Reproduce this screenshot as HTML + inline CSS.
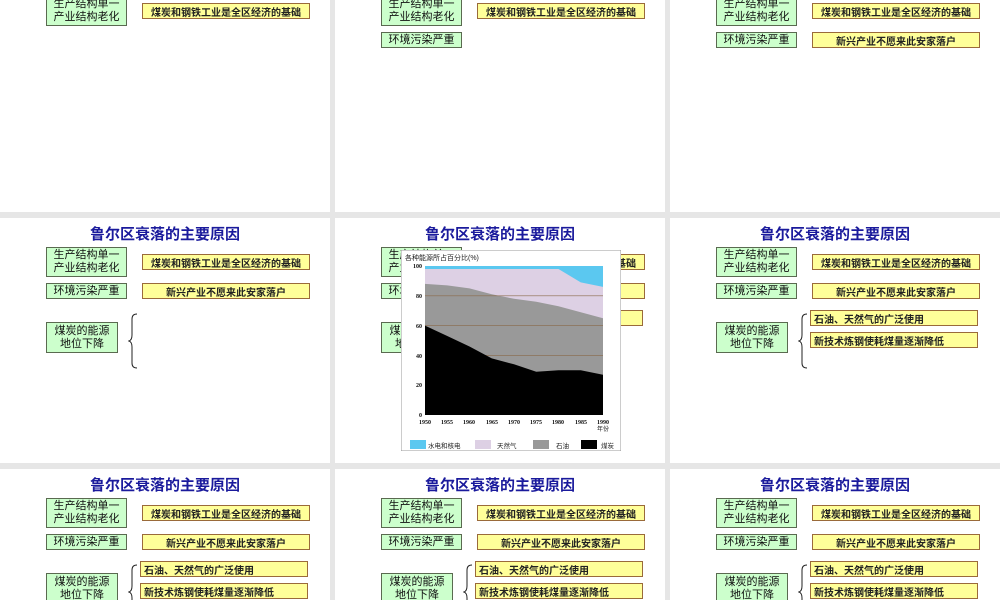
<!DOCTYPE html>
<html><head><meta charset="utf-8"><style>
*{margin:0;padding:0;box-sizing:border-box}
html,body{width:1000px;height:600px;overflow:hidden}
body{background:#e6e6e6;position:relative;font-family:"Liberation Sans","Noto Sans CJK SC",sans-serif}
.s{position:absolute;width:330px;height:245px;background:#fff;overflow:hidden}
.s.b{height:131px}
.t{position:absolute;left:0;width:330px;top:5px;text-align:center;font-size:15px;font-weight:bold;color:#1a1a9c}
.g{position:absolute;background:#ccffcc;border:1px solid #5a6a50;font-size:11px;line-height:13px;text-align:center;color:#111;display:flex;align-items:center;justify-content:center}
.y{position:absolute;background:#ffff99;border:1px solid #9a6a3a;font-size:10px;font-weight:bold;color:#222;height:16px;width:168px;display:flex;align-items:center}
.c{justify-content:center}
.l{padding-left:3px}
.br{position:absolute;left:128px;top:95px}
</style></head><body>

<div class="s" style="left:0;top:-33px">
<div class="g" style="left:46px;top:29px;width:81px;height:30px">生产结构单一<br>产业结构老化</div>
<div class="y c" style="left:142px;top:36px">煤炭和钢铁工业是全区经济的基础</div>
</div>
<div class="s" style="left:335px;top:-33px">
<div class="g" style="left:46px;top:29px;width:81px;height:30px">生产结构单一<br>产业结构老化</div>
<div class="y c" style="left:142px;top:36px">煤炭和钢铁工业是全区经济的基础</div>
<div class="g" style="left:46px;top:65px;width:81px;height:16px">环境污染严重</div>
</div>
<div class="s" style="left:670px;top:-33px">
<div class="g" style="left:46px;top:29px;width:81px;height:30px">生产结构单一<br>产业结构老化</div>
<div class="y c" style="left:142px;top:36px">煤炭和钢铁工业是全区经济的基础</div>
<div class="g" style="left:46px;top:65px;width:81px;height:16px">环境污染严重</div>
<div class="y c" style="left:142px;top:65px">新兴产业不愿来此安家落户</div>
</div>

<div class="s" style="left:0;top:218px">
<div class="t">鲁尔区衰落的主要原因</div>
<div class="g" style="left:46px;top:29px;width:81px;height:30px">生产结构单一<br>产业结构老化</div>
<div class="y c" style="left:142px;top:36px">煤炭和钢铁工业是全区经济的基础</div>
<div class="g" style="left:46px;top:65px;width:81px;height:16px">环境污染严重</div>
<div class="y c" style="left:142px;top:65px">新兴产业不愿来此安家落户</div>
<div class="g" style="left:46px;top:104px;width:72px;height:31px">煤炭的能源<br>地位下降</div>
<svg class="br" width="12" height="56"><path d="M9 1 Q4 1 4 6 V22 Q4 27 1 28 Q4 29 4 34 V50 Q4 55 9 55" fill="none" stroke="#222" stroke-width="1"/></svg>
</div>
<div class="s" style="left:335px;top:218px">
<div class="t">鲁尔区衰落的主要原因</div>
<div class="g" style="left:46px;top:29px;width:81px;height:30px">生产结构单一<br>产业结构老化</div>
<div class="y c" style="left:142px;top:36px">煤炭和钢铁工业是全区经济的基础</div>
<div class="g" style="left:46px;top:65px;width:81px;height:16px">环境污染严重</div>
<div class="y c" style="left:142px;top:65px">新兴产业不愿来此安家落户</div>
<div class="g" style="left:46px;top:104px;width:72px;height:31px">煤炭的能源<br>地位下降</div>
<div class="y l" style="left:140px;top:92px">石油、天然气的广泛使用</div>
<svg style="position:absolute;left:66px;top:32px" width="220" height="201">
<rect x="0" y="0" width="220" height="201" fill="#fff" stroke="#999"/>
<text x="4" y="10" font-size="7" fill="#222" font-family="Liberation Sans,Noto Sans CJK SC,sans-serif">各种能源所占百分比(%)</text>
<rect x="24" y="16" width="178" height="149" fill="#5bc8f0"/>
<polygon points="24,19 46.25,19 68.5,19 90.75,19 113,19 135.25,19 157.5,19 179.75,32.4 202,36.9 202,165 24,165" fill="#ddd0e4"/>
<polygon points="24,33.9 46.25,35.4 68.5,38.4 90.75,44.3 113,48.8 135.25,51.8 157.5,56.2 179.75,62.2 202,68.2 202,165 24,165" fill="#999"/>
<g stroke="#8a6a4a" stroke-width="0.6"><line x1="24" y1="45.8" x2="202" y2="45.8"/><line x1="24" y1="75.6" x2="202" y2="75.6"/><line x1="24" y1="105.4" x2="202" y2="105.4"/><line x1="24" y1="135.2" x2="202" y2="135.2"/></g>
<polygon points="24,75.6 46.25,86 68.5,96.5 90.75,108.4 113,114.3 135.25,121.8 157.5,120.3 179.75,120.3 202,124.8 202,165 24,165" fill="#000"/>
<g font-size="6" font-weight="bold" font-family="Liberation Serif,serif" fill="#111" text-anchor="end">
<text x="21" y="18">100</text><text x="21" y="48">80</text><text x="21" y="78">60</text><text x="21" y="108">40</text><text x="21" y="137">20</text><text x="21" y="167">0</text></g>
<g font-size="6" font-weight="bold" font-family="Liberation Serif,serif" fill="#111" text-anchor="middle">
<text x="24" y="174">1950</text><text x="46" y="174">1955</text><text x="68" y="174">1960</text><text x="91" y="174">1965</text><text x="113" y="174">1970</text><text x="135" y="174">1975</text><text x="157" y="174">1980</text><text x="180" y="174">1985</text><text x="202" y="174">1990</text></g>
<text x="196" y="181" font-size="6" fill="#222" font-family="Noto Sans CJK SC,sans-serif">年份</text>
<g font-size="6.5" fill="#222" font-family="Noto Sans CJK SC,sans-serif">
<rect x="9" y="190" width="16" height="9" fill="#5bc8f0"/><text x="27" y="198">水电和核电</text>
<rect x="74" y="190" width="16" height="9" fill="#ddd0e4"/><text x="96" y="198">天然气</text>
<rect x="132" y="190" width="16" height="9" fill="#999"/><text x="155" y="198">石油</text>
<rect x="180" y="190" width="16" height="9" fill="#000"/><text x="200" y="198">煤炭</text></g>
</svg>
</div>
<div class="s" style="left:670px;top:218px">
<div class="t">鲁尔区衰落的主要原因</div>
<div class="g" style="left:46px;top:29px;width:81px;height:30px">生产结构单一<br>产业结构老化</div>
<div class="y c" style="left:142px;top:36px">煤炭和钢铁工业是全区经济的基础</div>
<div class="g" style="left:46px;top:65px;width:81px;height:16px">环境污染严重</div>
<div class="y c" style="left:142px;top:65px">新兴产业不愿来此安家落户</div>
<div class="g" style="left:46px;top:104px;width:72px;height:31px">煤炭的能源<br>地位下降</div>
<svg class="br" width="12" height="56"><path d="M9 1 Q4 1 4 6 V22 Q4 27 1 28 Q4 29 4 34 V50 Q4 55 9 55" fill="none" stroke="#222" stroke-width="1"/></svg>
<div class="y l" style="left:140px;top:92px">石油、天然气的广泛使用</div>
<div class="y l" style="left:140px;top:114px">新技术炼钢使耗煤量逐渐降低</div>
</div>

<div class="s b" style="left:0;top:469px">
<div class="t">鲁尔区衰落的主要原因</div>
<div class="g" style="left:46px;top:29px;width:81px;height:30px">生产结构单一<br>产业结构老化</div>
<div class="y c" style="left:142px;top:36px">煤炭和钢铁工业是全区经济的基础</div>
<div class="g" style="left:46px;top:65px;width:81px;height:16px">环境污染严重</div>
<div class="y c" style="left:142px;top:65px">新兴产业不愿来此安家落户</div>
<div class="g" style="left:46px;top:104px;width:72px;height:31px">煤炭的能源<br>地位下降</div>
<svg class="br" width="12" height="56"><path d="M9 1 Q4 1 4 6 V22 Q4 27 1 28 Q4 29 4 34 V50 Q4 55 9 55" fill="none" stroke="#222" stroke-width="1"/></svg>
<div class="y l" style="left:140px;top:92px">石油、天然气的广泛使用</div>
<div class="y l" style="left:140px;top:114px">新技术炼钢使耗煤量逐渐降低</div>
</div>
<div class="s b" style="left:335px;top:469px">
<div class="t">鲁尔区衰落的主要原因</div>
<div class="g" style="left:46px;top:29px;width:81px;height:30px">生产结构单一<br>产业结构老化</div>
<div class="y c" style="left:142px;top:36px">煤炭和钢铁工业是全区经济的基础</div>
<div class="g" style="left:46px;top:65px;width:81px;height:16px">环境污染严重</div>
<div class="y c" style="left:142px;top:65px">新兴产业不愿来此安家落户</div>
<div class="g" style="left:46px;top:104px;width:72px;height:31px">煤炭的能源<br>地位下降</div>
<svg class="br" width="12" height="56"><path d="M9 1 Q4 1 4 6 V22 Q4 27 1 28 Q4 29 4 34 V50 Q4 55 9 55" fill="none" stroke="#222" stroke-width="1"/></svg>
<div class="y l" style="left:140px;top:92px">石油、天然气的广泛使用</div>
<div class="y l" style="left:140px;top:114px">新技术炼钢使耗煤量逐渐降低</div>
</div>
<div class="s b" style="left:670px;top:469px">
<div class="t">鲁尔区衰落的主要原因</div>
<div class="g" style="left:46px;top:29px;width:81px;height:30px">生产结构单一<br>产业结构老化</div>
<div class="y c" style="left:142px;top:36px">煤炭和钢铁工业是全区经济的基础</div>
<div class="g" style="left:46px;top:65px;width:81px;height:16px">环境污染严重</div>
<div class="y c" style="left:142px;top:65px">新兴产业不愿来此安家落户</div>
<div class="g" style="left:46px;top:104px;width:72px;height:31px">煤炭的能源<br>地位下降</div>
<svg class="br" width="12" height="56"><path d="M9 1 Q4 1 4 6 V22 Q4 27 1 28 Q4 29 4 34 V50 Q4 55 9 55" fill="none" stroke="#222" stroke-width="1"/></svg>
<div class="y l" style="left:140px;top:92px">石油、天然气的广泛使用</div>
<div class="y l" style="left:140px;top:114px">新技术炼钢使耗煤量逐渐降低</div>
</div>
</body></html>
